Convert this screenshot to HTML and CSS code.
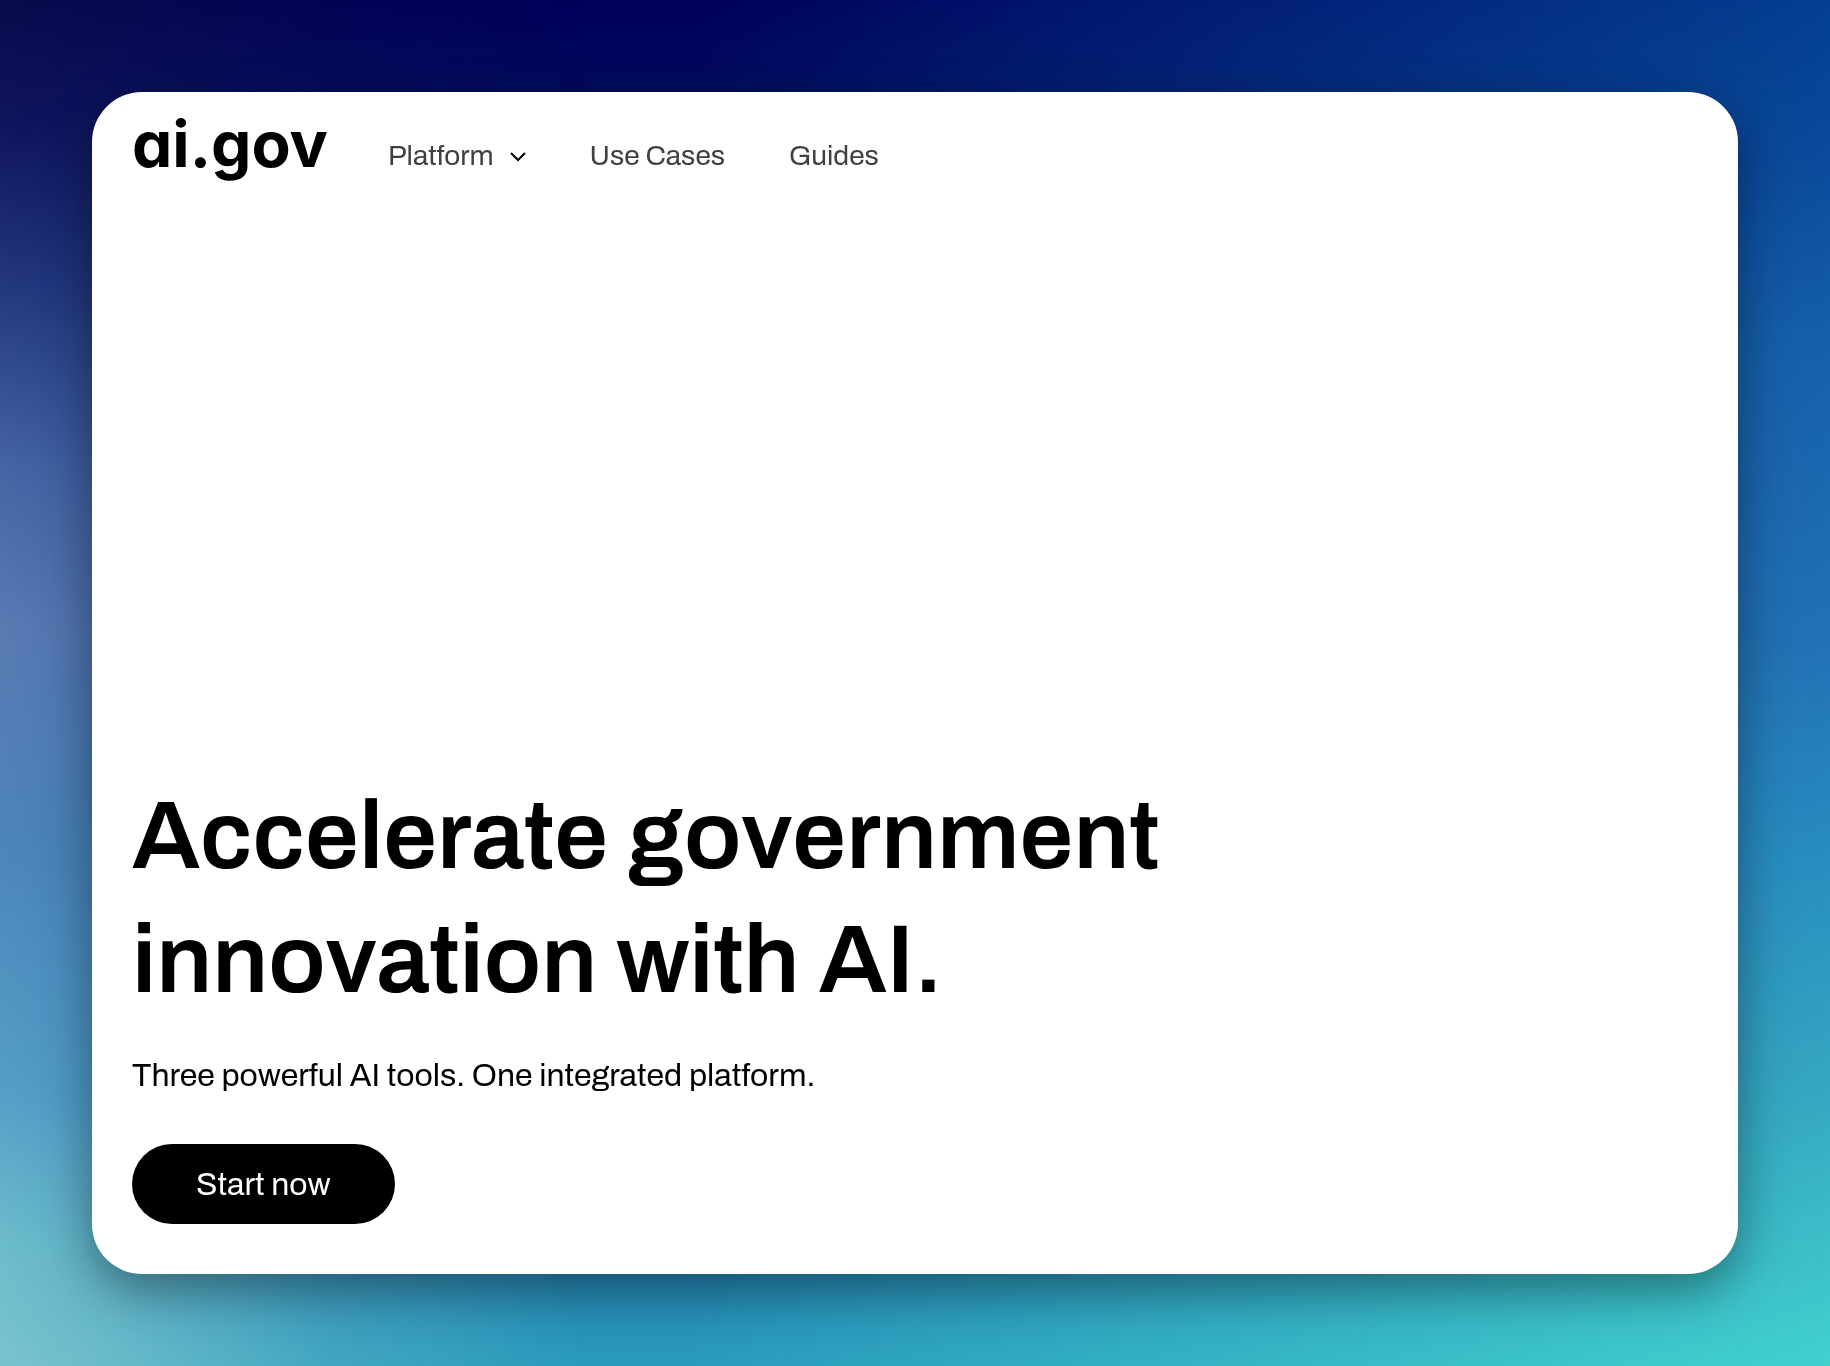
FILE: index.html
```html
<!DOCTYPE html>
<html lang="en">
<head>
    <meta charset="UTF-8">
    <meta name="viewport" content="width=device-width, initial-scale=1.0">
    <title>ai.gov</title>
    <link rel="stylesheet" href="styles.css">
</head>
<body>
    <div class="card">
        <header class="navbar">
            <a class="logo" href="#">ai.gov</a>
            <nav class="nav-links">
                <button class="nav-item" type="button">
                    Platform
                    <svg class="chevron" viewBox="0 0 16 16" aria-hidden="true">
                        <path d="M1 5l7 7 7-7"/>
                    </svg>
                </button>
                <a class="nav-item" href="#">Use Cases</a>
                <a class="nav-item" href="#">Guides</a>
            </nav>
        </header>
        <main class="hero">
            <h1>Accelerate government innovation with AI.</h1>
            <p>Three powerful AI tools. One integrated platform.</p>
            <button class="start" type="button">Start now</button>
        </main>
    </div>
</body>
</html>
```

FILE: styles.css
```css
* {
    box-sizing: border-box;
}
body {
    margin: 0;
    min-height: 100vh;
    padding: 92px;
    display: flex;
    font-family: Archivo, "Liberation Sans", Arial, sans-serif;
    color: #000;
    background: linear-gradient(#043f92 0%, #0b4c9c 12%, #1660ab 25%, #2272b5 47%, #288cc0 62%, #36a8c2 80%, #42d2ce 100%);
}
/* middle and left colour columns, faded over the right hand one */
body::before,
body::after {
    content: "";
    position: fixed;
    inset: 0;
    z-index: -1;
}
body::before {
    background: linear-gradient(#00005a 0%, #02105f 10%, #1c4f97 50%, #2077ae 88%, #2a9bbc 100%);
    mask-image: linear-gradient(90deg, #000 38%, transparent 100%);
}
body::after {
    background: linear-gradient(#080a4c 0%, #0f155c 9%, #22357c 20%, #4564a3 34%, #5a7ab3 46%, #4d86b9 62%, #559fc8 80%, #6cbccb 91%, #7ac3cd 100%);
    mask-image: linear-gradient(90deg, #000 0%, rgba(0, 0, 0, 0.8) 6%, rgba(0, 0, 0, 0.3) 18%, transparent 32%);
}
.card {
    flex: 1;
    display: flex;
    flex-direction: column;
    padding: 16px 40px 50px;
    background: #fff;
    border-radius: 50px;
    box-shadow: 0 16px 48px rgba(0, 0, 0, 0.4);
}
.navbar {
    display: flex;
    align-items: flex-end;
    gap: 60px;
}
.logo {
    font-family: Inter, sans-serif;
    font-size: 64px;
    font-weight: 700;
    line-height: 72px;
    font-feature-settings: "cv11";
    color: #000;
    text-decoration: none;
}
.nav-links {
    display: flex;
    gap: 64px;
}
.nav-item {
    display: flex;
    align-items: center;
    gap: 16px;
    padding: 0;
    border: 0;
    background: none;
    font-family: inherit;
    font-size: 28px;
    line-height: 48px;
    color: #404040;
    text-decoration: none;
    cursor: pointer;
}
.chevron {
    width: 16px;
    height: 16px;
    fill: none;
    stroke: #000;
    stroke-width: 2;
}
.hero {
    margin-top: auto;
    max-width: 1100px;
}
h1 {
    margin: 0 0 32px;
    font-size: 96px;
    font-weight: 600;
    line-height: 124px;
}
p {
    margin: 0 0 46px;
    font-size: 32px;
    line-height: 44px;
}
.start {
    display: block;
    height: 80px;
    padding: 0 64px;
    border: 0;
    border-radius: 40px;
    background: #000;
    color: #fff;
    font-family: inherit;
    font-size: 32px;
    cursor: pointer;
}
```
